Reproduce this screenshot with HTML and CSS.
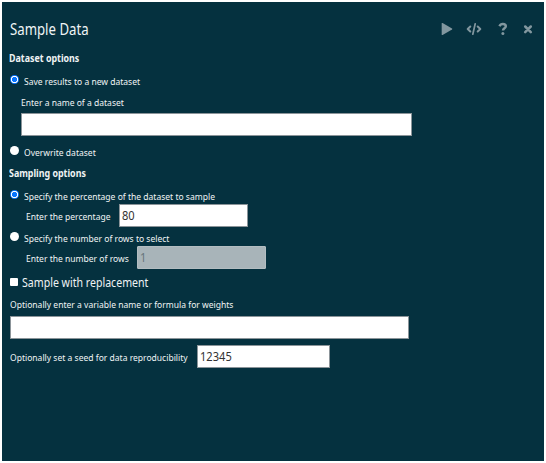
FILE: index.html
```
<!DOCTYPE html>
<html lang="en">
<head>
<meta charset="utf-8">
<title>Sample Data</title>
<link rel="stylesheet" href="styles.css">
</head>
<body>
<main class="dialog">
  <header class="header">
    <h1 class="title"><span>Sample Data</span></h1>
    <nav class="actions">
      <svg class="play" width="12" height="14" viewBox="0 0 12 14"><path d="M1.6 1 11 6.4q.8.6 0 1.2L1.6 13Q.7 13.400 .7 12.400V1.600Q.7.600 1.600 1Z" fill="currentColor"/></svg>
      <svg class="code" width="16" height="14" viewBox="0 0 16 14" fill="none" stroke="currentColor" stroke-width="2" stroke-linecap="round" stroke-linejoin="round"><path d="M4.300 4.500 1.700 7l2.600 2.500M11.700 4.500l2.600 2.500-2.600 2.500"/><path d="M9.200 1.800 6.800 12.200" stroke-width="1.700"/></svg>
      <svg class="help" width="10" height="14" viewBox="0 0 10 14" fill="none" stroke="currentColor"><path d="M1.500 4.200C2.200 2.500 3.300 2 4.800 2c1.900 0 3 1 3 2.300C7.800 6.300 5 6.200 5 8.500" stroke-width="2.500"/><circle cx="4.900" cy="11.600" r="1.500" fill="currentColor" stroke="none"/></svg>
      <svg class="close" width="10" height="14" viewBox="0 0 10 14" fill="none" stroke="currentColor" stroke-width="2.500" stroke-linecap="round"><path d="m2.200 4.500 5.600 5.600M7.800 4.500 2.200 10.100"/></svg>
    </nav>
  </header>
  <h2 class="heading h-dataset"><span>Dataset options</span></h2>
  <label class="option o-save"><i class="radio checked"></i><span>Save results to a new dataset</span></label>
  <div class="caption c-name"><span>Enter a name of a dataset</span></div>
  <div class="field f-name"></div>
  <label class="option o-over"><i class="radio"></i><span>Overwrite dataset</span></label>
  <h2 class="heading h-sampling"><span>Sampling options</span></h2>
  <label class="option o-pct"><i class="radio checked"></i><span>Specify the percentage of the dataset to sample</span></label>
  <div class="row r-pct"><div class="label"><span>Enter the percentage</span></div><div class="field"><span>80</span></div></div>
  <label class="option o-rows"><i class="radio"></i><span>Specify the number of rows to select</span></label>
  <div class="row r-rows"><div class="label"><span>Enter the number of rows</span></div><div class="field disabled"><span>1</span></div></div>
  <label class="check"><i class="box"></i><span>Sample with replacement</span></label>
  <div class="caption c-weights"><span>Optionally enter a variable name or formula for weights</span></div>
  <div class="field f-weights"></div>
  <div class="row r-seed"><div class="label"><span>Optionally set a seed for data reproducibility</span></div><div class="field"><span>12345</span></div></div>
</main>
</body>
</html>
```
FILE: styles.css
```
* { box-sizing: border-box; }
body {
  margin: 0;
  padding: 2px;
  background: #fff;
  font: 9.600px/12px "Noto Sans", sans-serif;
  color: #f0f4f5;
}
.dialog {
  width: 542px;
  height: 459px;
  padding: 18px 8px 0;
  background: #05313f;
  white-space: nowrap;
  overflow: hidden;
}
/* condensed lettering */
.dialog span { display: inline-block; transform: scaleX(.889); transform-origin: 0 50%; }
.header { display: flex; justify-content: space-between; height: 18px; }
.title { margin: 0; font-size: 16px; line-height: 18px; font-weight: 400; }
.dialog .title span { transform: scaleX(.825); }
.actions { display: flex; padding-top: 2px; color: #82979f; }
.code { margin-left: 13px; }
.help { margin-left: 16px; }
.close { margin: 0 3px 0 15px; }
.heading { height: 14px; margin: 0 0 0 -1px; font-size: 10.800px; line-height: 14px; font-weight: 700; }
.dialog .heading span { transform: scaleX(.822); }
.h-dataset { margin-top: 13px; }
.h-sampling { margin-top: 8px; }
.option { display: flex; height: 12px; }
.option span { margin: 1px 0 0 5px; }
.radio { width: 9px; height: 9px; margin: -.5px .5px 0 -.5px; border-radius: 50%; background: #fff; }
.radio.checked { background: radial-gradient(circle, #0875ff 0 2.300px, #fff 2.900px 3.400px, #0875ff 4px); }
.o-save { margin-top: 10px; }
.caption { height: 12px; }
.c-name { margin: 9px 0 0 11px; }
.c-name span { margin-top: 1px; }
.field {
  height: 23px;
  padding: 0 2px;
  border: 1px solid #8b9499;
  background: #fff;
  color: #333;
  font-size: 12.200px;
  line-height: 22px;
}
.dialog .field span { transform: scaleX(.91); }
.f-name { width: 391px; margin: 5px 0 0 11px; }
.o-over { margin-top: 10px; }
.o-pct { margin-top: 10px; }
.row { display: flex; align-items: center; height: 23px; }
.row .label { padding-top: 2px; flex: none; }
.row .field { width: 129px; }
.r-pct { margin: 2px 0 0 16px; }
.r-pct .label { width: 93px; }
.o-rows { margin-top: 5px; }
.r-rows { margin: 2px 0 0 16px; }
.r-rows .label { width: 111px; }
.row .disabled { background: #a8b4b9; border-color: #b3bdc1; border-radius: 1px; color: #66757b; }
.check { display: flex; height: 16px; margin-top: 5px; align-items: center; font-size: 12px; line-height: 16px; }
.box { width: 8px; height: 8px; background: #fff; border-radius: 1px; }
.dialog .check span { margin: 1px 0 0 4px; transform: scaleX(.882); }
.c-weights { margin-top: 8px; }
.c-weights span { margin-top: 1px; }
.f-weights { width: 399px; margin-top: 6px; }
.r-seed { margin-top: 6px; }
.r-seed .label { width: 187px; padding-top: 2px; }
.row.r-seed .field { width: 133px; }
```
